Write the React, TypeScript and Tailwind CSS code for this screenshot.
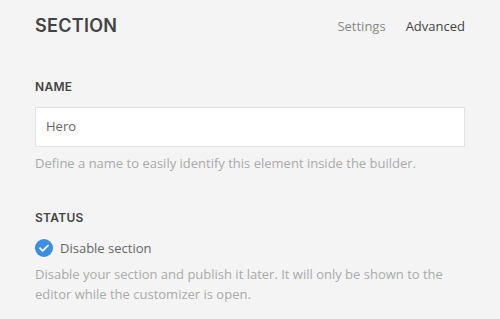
import React from 'react';

function CheckCircle() {
  return (
    <svg width="18" height="18" viewBox="0 0 18 18" className="shrink-0">
      <circle cx="9" cy="9" r="9" fill="#3a8ee6" />
      <path d="M5 9.2l2.6 2.6L13 6.6" fill="none" stroke="#fff" strokeWidth="1.8" strokeLinecap="round" strokeLinejoin="round" />
    </svg>
  );
}

export default function App() {
  return (
    <div className="h-[319px] w-[500px] overflow-hidden bg-[#f4f4f4] px-[35px] font-['Open_Sans',sans-serif]">
      <div className="flex items-center justify-between pt-[14px] leading-[24px]">
        <h1 className="font-['Inter',sans-serif] text-[18px] font-semibold tracking-[0.3px] text-[#444]">SECTION</h1>
        <div className="flex gap-[20px] text-[13px]">
          <span className="text-[#888]">Settings</span>
          <span className="text-[#444]">Advanced</span>
        </div>
      </div>

      <div className="mt-[40px] font-['Inter',sans-serif] text-[12px] font-semibold leading-[18px] tracking-[0.3px] text-[#444]">NAME</div>
      <div className="mt-[11px] flex h-[40px] items-center border border-[#e3e3e3] bg-white px-[10px] text-[13px] text-[#666]">Hero</div>
      <p className="mt-[6px] text-[13px] leading-[20px] text-[#aaa]">Define a name to easily identify this element inside the builder.</p>

      <div className="mt-[36px] font-['Inter',sans-serif] text-[12px] font-semibold leading-[18px] tracking-[0.3px] text-[#444]">STATUS</div>
      <div className="mt-[10px] flex items-center gap-[7px] text-[13px] leading-[22px] text-[#666]">
        <CheckCircle />
        <span>Disable section</span>
      </div>
      <p className="mt-[5px] text-[13px] leading-[20px] text-[#aaa]">
        Disable your section and publish it later. It will only be shown to the editor while the customizer is open.
      </p>
    </div>
  );
}
